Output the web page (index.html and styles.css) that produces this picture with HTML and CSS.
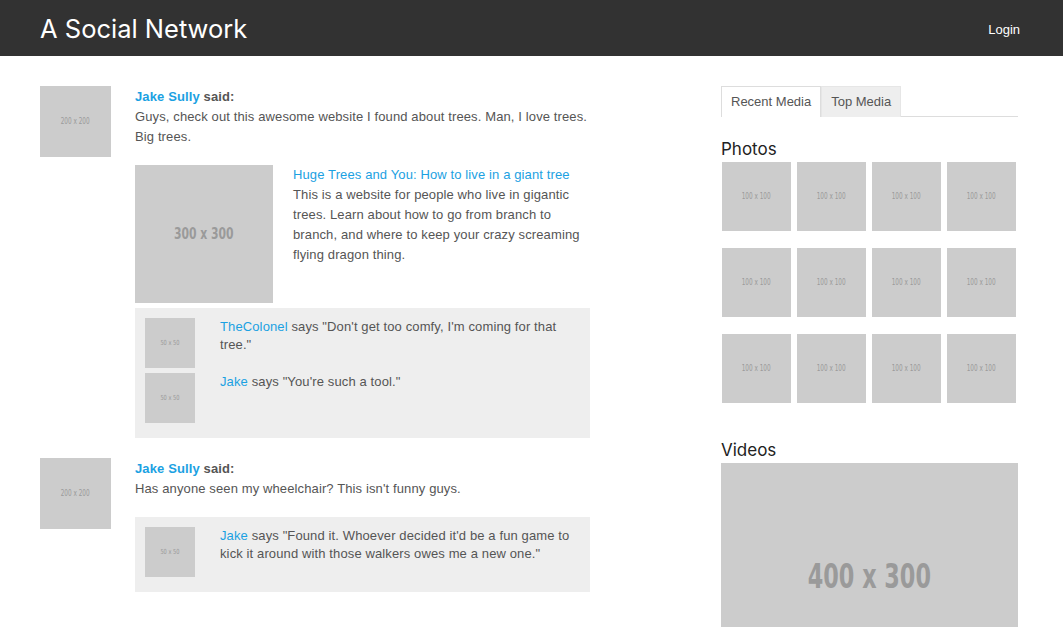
FILE: index.html
```html
<!DOCTYPE html>
<html lang="en">
<head>
  <meta charset="UTF-8">
  <meta name="viewport" content="width=device-width, initial-scale=1.0">
  <title>A Social Network</title>
  <link rel="stylesheet" href="styles.css">
</head>
<body>
  <header class="topbar">
    <h1 class="brand">A Social Network</h1>
    <a class="login" href="#">Login</a>
  </header>

  <div class="page">
    <main class="feed">
      <div class="post">
        <div class="ph avatar"><span>200 x 200</span></div>
        <div class="post-body">
          <p class="author"><a href="#">Jake Sully</a> said:</p>
          <p class="post-text">Guys, check out this awesome website I found about trees. Man, I love trees. Big trees.</p>

          <div class="preview">
            <div class="ph preview-img"><span>300 x 300</span></div>
            <div class="preview-text">
              <a href="#">Huge Trees and You: How to live in a giant tree</a>
              <p>This is a website for people who live in gigantic trees. Learn about how to go from branch to branch, and where to keep your crazy screaming flying dragon thing.</p>
            </div>
          </div>

          <div class="comments">
            <div class="comment">
              <div class="ph small"><span>50 x 50</span></div>
              <p><a href="#">TheColonel</a> says "Don't get too comfy, I'm coming for that tree."</p>
            </div>
            <div class="comment">
              <div class="ph small"><span>50 x 50</span></div>
              <p><a href="#">Jake</a> says "You're such a tool."</p>
            </div>
          </div>
        </div>
      </div>

      <div class="post">
        <div class="ph avatar"><span>200 x 200</span></div>
        <div class="post-body">
          <p class="author"><a href="#">Jake Sully</a> said:</p>
          <p class="post-text">Has anyone seen my wheelchair? This isn't funny guys.</p>

          <div class="comments">
            <div class="comment">
              <div class="ph small"><span>50 x 50</span></div>
              <p><a href="#">Jake</a> says "Found it. Whoever decided it'd be a fun game to kick it around with those walkers owes me a new one."</p>
            </div>
          </div>
        </div>
      </div>
    </main>

    <aside class="sidebar">
      <ul class="tabs">
        <li class="tab active">Recent Media</li>
        <li class="tab">Top Media</li>
      </ul>

      <h3 class="section-title">Photos</h3>
      <div class="photos">
        <div class="ph thumb"><span>100 x 100</span></div>
        <div class="ph thumb"><span>100 x 100</span></div>
        <div class="ph thumb"><span>100 x 100</span></div>
        <div class="ph thumb"><span>100 x 100</span></div>
        <div class="ph thumb"><span>100 x 100</span></div>
        <div class="ph thumb"><span>100 x 100</span></div>
        <div class="ph thumb"><span>100 x 100</span></div>
        <div class="ph thumb"><span>100 x 100</span></div>
        <div class="ph thumb"><span>100 x 100</span></div>
        <div class="ph thumb"><span>100 x 100</span></div>
        <div class="ph thumb"><span>100 x 100</span></div>
        <div class="ph thumb"><span>100 x 100</span></div>
      </div>

      <h3 class="section-title videos-title">Videos</h3>
      <div class="ph video"><span>400 x 300</span></div>
    </aside>
  </div>
</body>
</html>
```

FILE: styles.css
```css
:root {
  --link: #1ba1e2;
  --text: #555;
  --ph-bg: #cccccc;
  --ph-text: #9a9a9a;
  --heading-font: 'Inter', 'Lato', sans-serif;
  --ph-font: 'DejaVu Sans Condensed', 'DejaVu Sans', sans-serif;
}
* {
  box-sizing: border-box;
}
html, body {
  overflow: hidden;
}
body {
  margin: 0;
  font-family: 'Liberation Sans', Arial, sans-serif;
  font-size: 13px;
  line-height: 20px;
  letter-spacing: 0.12px;
  color: var(--text);
  background: #fff;
}
p {
  margin: 0;
}
a {
  color: var(--link);
  text-decoration: none;
}

/* top bar */
.topbar {
  height: 56px;
  background: #323232;
  display: flex;
  align-items: center;
  justify-content: space-between;
  padding: 0 43px 0 40px;
}
.brand {
  margin: 0;
  padding-top: 1px;
  font-family: var(--heading-font);
  font-weight: 400;
  font-size: 25.5px;
  letter-spacing: 0;
  color: #fff;
}
.login {
  color: #fff;
  font-size: 13px;
  letter-spacing: 0;
  padding-top: 3px;
}

/* layout */
.page {
  display: flex;
  padding: 30px 45px 0 40px;
  gap: 131px;
}
.feed {
  width: 550px;
}
.sidebar {
  width: 297px;
}

/* placeholders */
.ph {
  background: var(--ph-bg);
  color: var(--ph-text);
  display: flex;
  align-items: center;
  justify-content: center;
  font-family: var(--ph-font);
  font-size: 8px;
  letter-spacing: 0;
  flex-shrink: 0;
}
.ph span {
  display: inline-block;
  transform: scaleX(0.8);
  white-space: nowrap;
}

/* posts */
.post {
  display: flex;
  gap: 24px;
  margin-bottom: 20px;
}
.avatar {
  width: 71px;
  height: 71px;
}
.post-body {
  flex: 1;
}
.author {
  font-weight: bold;
  padding-top: 1px;
}
.post-text {
  margin-bottom: 18px;
}

.preview {
  display: flex;
  gap: 20px;
  margin-bottom: 5px;
}
.preview-img {
  width: 138px;
  height: 138px;
  font-size: 16px;
  font-weight: bold;
}
.preview-img span {
  transform: scaleX(0.75);
}

.comments {
  background: #eeeeee;
  padding: 10px 10px 10px;
}
.comment {
  display: flex;
  gap: 25px;
  margin-bottom: 5px;
  line-height: 18px;
}
.small {
  width: 50px;
  height: 50px;
  font-size: 7px;
}

/* sidebar */
.tabs {
  list-style: none;
  margin: 0;
  padding: 0;
  display: flex;
  border-bottom: 1px solid #dddddd;
  letter-spacing: 0;
}
.tab {
  height: 31px;
  line-height: 30px;
  padding: 0 9px;
  background: #eeeeee;
  border: 1px solid #e6e6e6;
  border-bottom: none;
  margin-bottom: -1px;
}
.tab.active {
  background: #fff;
  border-color: #dddddd;
}
.section-title {
  margin: 20px 0 1px;
  font-family: var(--heading-font);
  font-weight: 400;
  font-size: 17px;
  line-height: 24px;
  letter-spacing: 0;
  color: #222;
}
.photos {
  display: grid;
  grid-template-columns: repeat(4, 69px);
  column-gap: 6px;
  row-gap: 17px;
  padding-left: 1px;
}
.thumb {
  height: 69px;
}
.videos-title {
  margin-top: 35px;
}
.video {
  width: 297px;
  height: 223px;
  font-size: 34px;
  font-weight: bold;
  padding-top: 2px;
}
.video span {
  transform: scaleX(0.73);
}
```
